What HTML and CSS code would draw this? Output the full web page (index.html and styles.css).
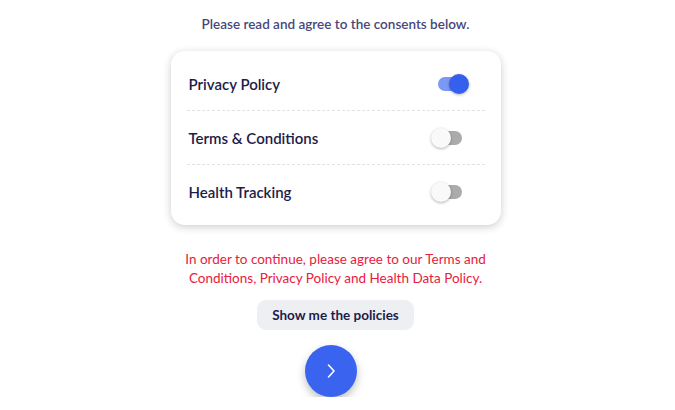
FILE: index.html
```html
<!DOCTYPE html>
<html lang="en">
<head>
    <meta charset="UTF-8">
    <meta name="viewport" content="width=device-width, initial-scale=1.0">
    <title>Consents</title>
    <link rel="stylesheet" href="styles.css">
</head>
<body>
    <main class="consents">
        <p class="intro">Please read and agree to the consents below.</p>

        <section class="card">
            <div class="row">
                <span class="row-label">Privacy Policy</span>
                <span class="toggle on"><span class="knob"></span></span>
            </div>
            <div class="row">
                <span class="row-label">Terms &amp; Conditions</span>
                <span class="toggle"><span class="knob"></span></span>
            </div>
            <div class="row">
                <span class="row-label">Health Tracking</span>
                <span class="toggle"><span class="knob"></span></span>
            </div>
        </section>

        <p class="warning">
            In order to continue, please agree to our Terms and<br>
            Conditions, Privacy Policy and Health Data Policy.
        </p>

        <button class="btn-policies">Show me the policies</button>

        <button class="btn-next" aria-label="Next">
            <svg width="16" height="16" viewBox="0 0 16 16">
                <path d="M5.5 2 L11 8 L5.5 14" fill="none" stroke="#fff" stroke-width="1.6" stroke-linecap="round" stroke-linejoin="round"/>
            </svg>
        </button>
    </main>
</body>
</html>
```

FILE: styles.css
```css
body {
    margin: 0;
    padding: 0 4px 0 0;
    background: #fff;
    font-family: Lato, "Open Sans", sans-serif;
    overflow: hidden;
}

.consents {
    display: flex;
    flex-direction: column;
    align-items: center;
    padding-top: 15px;
}

.intro {
    margin: 0;
    font-size: 13.5px;
    font-weight: 600;
    color: #47477a;
    line-height: 18px;
}

.card {
    margin-top: 18px;
    width: 330px;
    box-sizing: border-box;
    padding: 6px 16px;
    background: #fff;
    border-radius: 14px;
    box-shadow: 0 2px 8px rgba(0, 0, 0, 0.2);
}

.row {
    display: flex;
    justify-content: space-between;
    align-items: center;
    box-sizing: border-box;
    height: 54px;
    padding: 0 2px;
    border-bottom: 1px dashed #e2e2e6;
}

.row:last-child {
    border-bottom: none;
}

.row-label {
    font-size: 15px;
    font-weight: 600;
    color: #1c1c4a;
}

.toggle {
    position: relative;
    width: 24px;
    height: 14px;
    margin-right: 21px;
    border-radius: 7px;
    background: #ababab;
}

.toggle .knob {
    position: absolute;
    top: -3px;
    left: -7px;
    width: 20px;
    height: 20px;
    border-radius: 50%;
    background: #f9f9f9;
    box-shadow: 0 1px 3px rgba(0, 0, 0, 0.3);
}

.toggle.on {
    width: 30px;
    margin-right: 15px;
    background: #7c98f5;
}

.toggle.on .knob {
    left: 11px;
    background: #3560ee;
}

.warning {
    margin: 25px 0 0 0;
    font-size: 13.5px;
    line-height: 19px;
    text-align: center;
    color: #e8203c;
}

.btn-policies {
    margin-top: 12px;
    padding: 0 15px;
    height: 30px;
    border: none;
    border-radius: 9px;
    background: #eeeff3;
    font-family: inherit;
    font-size: 13.5px;
    font-weight: 700;
    color: #1c1c4a;
}

.btn-next {
    margin: 15px 9px 0 0;
    width: 52px;
    height: 52px;
    border: none;
    border-radius: 50%;
    background: #3a63f0;
    box-shadow: 0 4px 8px rgba(0, 0, 0, 0.25);
    display: flex;
    justify-content: center;
    align-items: center;
    padding: 0;
}
```
